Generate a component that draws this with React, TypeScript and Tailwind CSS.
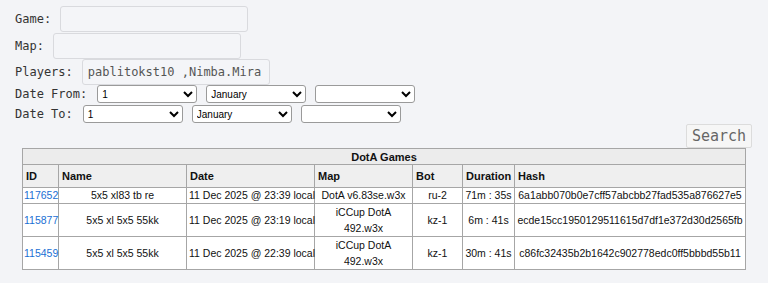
import React from 'react';

const mono = 'font-["DejaVu_Sans_Mono",monospace]';

const games = [
  { id: '117652', name: '5x5 xl83 tb re', date: '11 Dec 2025 @ 23:39 local', map: 'DotA v6.83se.w3x', bot: 'ru-2', dur: '71m : 35s', hash: '6a1abb070b0e7cff57abcbb27fad535a876627e5' },
  { id: '115877', name: '5x5 xl 5x5 55kk', date: '11 Dec 2025 @ 23:19 local', map: 'iCCup DotA 492.w3x', bot: 'kz-1', dur: '6m : 41s', hash: 'ecde15cc1950129511615d7df1e372d30d2565fb' },
  { id: '115459', name: '5x5 xl 5x5 55kk', date: '11 Dec 2025 @ 22:39 local', map: 'iCCup DotA 492.w3x', bot: 'kz-1', dur: '30m : 41s', hash: 'c86fc32435b2b1642c902778edc0ff5bbbd55b11' },
];

const months = ['January', 'February', 'March', 'April', 'May', 'June', 'July', 'August', 'September', 'October', 'November', 'December'];

const Field: React.FC<{ label: string; value?: string }> = ({ label, value }) => (
  <div className="flex items-center">
    <span className="mr-[9px]">{label}</span>
    <input
      readOnly
      value={value ?? ''}
      className={`w-[188px] h-[26px] px-[5px] border border-[#d9dade] rounded-[3px] bg-[#f4f5f8] text-[12px] text-[#555] outline-none ${mono}`}
    />
  </div>
);

const selectCls = "w-[100px] h-[18px] bg-white border border-[#9a9a9a] rounded-[3px] text-[10px] text-black font-['Liberation_Sans',sans-serif]";

const DateRow: React.FC<{ label: string; last?: boolean }> = ({ label, last }) => (
  <div className={`flex items-start ${last ? 'h-[19px]' : 'h-[20px]'}`}>
    <span className="mr-[10px] leading-[18px]">{label}</span>
    <select defaultValue="1" className={selectCls}>
      {Array.from({ length: 31 }, (_, i) => (
        <option key={i}>{i + 1}</option>
      ))}
    </select>
    <select defaultValue="January" className={`ml-[9px] ${selectCls}`}>
      {months.map(m => (
        <option key={m}>{m}</option>
      ))}
    </select>
    <select defaultValue="" className={`ml-[9px] ${selectCls}`}>
      <option value=""></option>
      <option>2025</option>
    </select>
  </div>
);

const th = 'border border-[#a6a6a6] bg-[#efefef] text-left font-bold px-[3px] h-[23px] text-[11px]';
const td = 'border border-[#a6a6a6] bg-white text-center px-[2px] py-0 leading-[15px]';

const App: React.FC = () => {
  return (
    <div className="w-full min-h-screen bg-[#f3f4f7] pt-[6px] pb-4">
      <div className={`pl-[15px] text-[12px] text-[#333] flex flex-col ${mono}`}>
        <Field label="Game:" />
        <div className="mt-[1px]"><Field label="Map:" /></div>
        <Field label="Players:" value="pablitokst10 ,Nimba.Mira" />
        <DateRow label="Date From:" />
        <DateRow label="Date To:" last />
      </div>
      <div className="flex justify-end pr-[16px]">
        <button className={`w-[66px] h-[24px] bg-[#f6f6f6] border border-[#dcdcdc] rounded-[2px] text-[15px] text-[#666] leading-none ${mono}`}>
          Search
        </button>
      </div>
      <table className="mx-auto w-[723px] table-fixed border-collapse border border-[#999] text-[10.5px] text-[#111] font-['Liberation_Sans',Arial,sans-serif]">
        <colgroup>
          <col className="w-[36px]" />
          <col className="w-[128px]" />
          <col className="w-[128px]" />
          <col className="w-[98px]" />
          <col className="w-[50px]" />
          <col className="w-[52px]" />
          <col className="w-[231px]" />
        </colgroup>
        <thead>
          <tr>
            <th colSpan={7} className="border border-[#a6a6a6] bg-[#ececec] font-bold text-center h-[16px] leading-[14px] text-[11px]">
              DotA Games
            </th>
          </tr>
          <tr>
            <th className={th}>ID</th>
            <th className={th}>Name</th>
            <th className={th}>Date</th>
            <th className={th}>Map</th>
            <th className={th}>Bot</th>
            <th className={th}>Duration</th>
            <th className={th}>Hash</th>
          </tr>
        </thead>
        <tbody>
          {games.map((g, i) => (
            <tr key={g.id}>
              <td className={`${td} text-left pl-[1px]`}>
                <a href="#" className="text-[#1a6fd4]">{g.id}</a>
              </td>
              <td className={td}>{g.name}</td>
              <td className={`${td} whitespace-nowrap`}>{g.date}</td>
              <td className={i === 0 ? td : `${td} leading-[16px]`}>{g.map}</td>
              <td className={td}>{g.bot}</td>
              <td className={`${td} whitespace-nowrap`}>{g.dur}</td>
              <td className={`${td} whitespace-nowrap`}>{g.hash}</td>
            </tr>
          ))}
        </tbody>
      </table>
    </div>
  );
};

export default App;
